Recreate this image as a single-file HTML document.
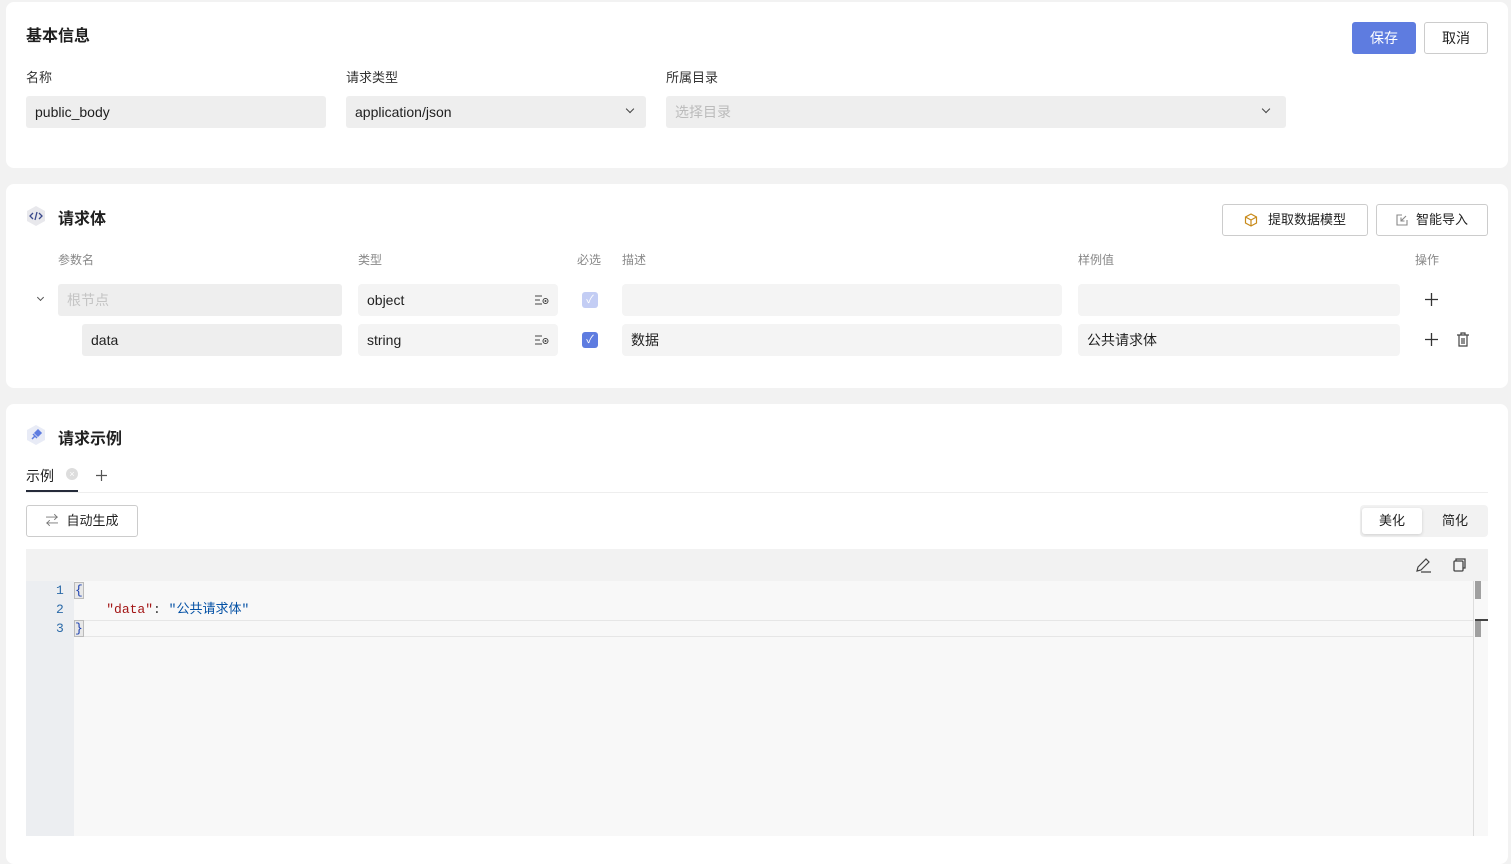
<!DOCTYPE html>
<html><head><meta charset="utf-8"><style>
*{box-sizing:border-box;margin:0;padding:0}
body{width:1511px;height:856px;background:#f2f2f2;font-family:"Liberation Sans","Noto Sans CJK SC",sans-serif;color:#1f1f1f;position:relative;overflow:hidden;font-size:14px}
.card{position:absolute;left:6px;width:1502px;background:#fff;border-radius:8px}
.a{position:absolute}
.lbl{font-size:13px;color:#333}
.inp{position:absolute;background:#eeeeee;border-radius:3px;height:32px;line-height:32px;padding-left:9px;font-size:14px}
.inp2{position:absolute;background:#f4f4f4;border-radius:4px;height:32px;line-height:32px;padding-left:9px;font-size:14px}
.th{position:absolute;font-size:12px;color:#888;top:67px}
.btn{position:absolute;border:1px solid #ccc;border-radius:3px;background:#fff;font-size:13px;text-align:center}
.ti{font-size:16px;font-weight:bold;position:absolute}
.chev{position:absolute;width:7px;height:7px;border-right:1.3px solid #444;border-bottom:1.3px solid #444;transform:rotate(45deg)}
.mono{font-family:"Liberation Mono","Noto Sans CJK SC",monospace;font-size:13px}
.ticon{position:absolute;left:177px;top:11px}
</style></head><body>

<div class="card" style="top:2px;height:166px">
  <div class="ti" style="left:20px;top:20px">基本信息</div>
  <div class="btn" style="left:1346px;top:20px;width:64px;height:32px;line-height:30px;background:#5e7ce0;border-color:#5e7ce0;color:#fff;font-size:14px">保存</div>
  <div class="btn" style="left:1418px;top:20px;width:64px;height:32px;line-height:30px;font-size:14px">取消</div>
  <div class="a lbl" style="left:20px;top:65px">名称</div>
  <div class="a lbl" style="left:340px;top:65px">请求类型</div>
  <div class="a lbl" style="left:660px;top:65px">所属目录</div>
  <div class="inp" style="left:20px;top:94px;width:300px">public_body</div>
  <div class="inp" style="left:340px;top:94px;width:300px">application/json<div class="chev" style="left:281px;top:10px;width:6px;height:6px"></div></div>
  <div class="inp" style="left:660px;top:94px;width:620px;color:#bbb">选择目录<div class="chev" style="left:597px;top:10px;width:6px;height:6px"></div></div>
</div>

<div class="card" style="top:184px;height:204px">
  <svg class="a" style="left:19px;top:21px" width="22" height="22" viewBox="0 0 22 22"><polygon points="11,1 20,6 20,16 11,21 2,16 2,6" fill="#e8e8ec"/><path d="M8 8l-3 3 3 3M14 8l3 3-3 3M12 7l-2 8" stroke="#3b4a8c" stroke-width="1.3" fill="none"/></svg>
  <div class="ti" style="left:52px;top:21px">请求体</div>
  <div class="btn" style="left:1216px;top:20px;width:146px;height:32px;line-height:30px"><svg style="vertical-align:-3px;margin-right:10px" width="14" height="14" viewBox="0 0 14 14"><path d="M7 1l5.5 3v6L7 13 1.5 10V4z M1.5 4L7 7l5.5-3 M7 7v6" stroke="#c88a1a" fill="none" stroke-width="1.2"/></svg>提取数据模型</div>
  <div class="btn" style="left:1370px;top:20px;width:112px;height:32px;line-height:30px"><svg style="vertical-align:-2px;margin-right:8px" width="12" height="12" viewBox="0 0 12 12"><path d="M6 1H1v10h10V6 M10 2L5 7 M5 3.5V7h3.5" stroke="#888" fill="none" stroke-width="1.1"/></svg>智能导入</div>
  <div class="th" style="left:52px">参数名</div>
  <div class="th" style="left:352px">类型</div>
  <div class="th" style="left:571px">必选</div>
  <div class="th" style="left:616px">描述</div>
  <div class="th" style="left:1072px">样例值</div>
  <div class="th" style="left:1409px">操作</div>
  <div class="chev" style="left:32px;top:111px;width:5px;height:5px;border-color:#555"></div>
  <div class="inp" style="left:52px;top:100px;width:284px;color:#c4c4c4">根节点</div>
  <div class="inp2" style="left:352px;top:100px;width:200px">object<svg class="ticon" width="14" height="10" viewBox="0 0 14 10"><path d="M0 1h7M0 5h5M0 9h7" stroke="#444"/><circle cx="10.5" cy="6" r="2.5" stroke="#444" fill="none"/><circle cx="10.5" cy="6" r="1" fill="#444"/></svg></div>
  <div class="a" style="left:576px;top:108px;width:16px;height:16px;border-radius:3px;background:#c3cdf4;color:#fff;font-size:11px;line-height:16px;text-align:center">✓</div>
  <div class="inp2" style="left:616px;top:100px;width:440px"></div>
  <div class="inp2" style="left:1072px;top:100px;width:322px"></div>
  <svg class="a" style="left:1419px;top:109px" width="13" height="13" viewBox="0 0 13 13"><path d="M6.5 0v13M0 6.5h13" stroke="#333" stroke-width="1.3"/></svg>
  <div class="inp" style="left:76px;top:140px;width:260px">data</div>
  <div class="inp2" style="left:352px;top:140px;width:200px">string<svg class="ticon" width="14" height="10" viewBox="0 0 14 10"><path d="M0 1h7M0 5h5M0 9h7" stroke="#444"/><circle cx="10.5" cy="6" r="2.5" stroke="#444" fill="none"/><circle cx="10.5" cy="6" r="1" fill="#444"/></svg></div>
  <div class="a" style="left:576px;top:148px;width:16px;height:16px;border-radius:3px;background:#5e7ce0;color:#fff;font-size:11px;line-height:16px;text-align:center">✓</div>
  <div class="inp2" style="left:616px;top:140px;width:440px">数据</div>
  <div class="inp2" style="left:1072px;top:140px;width:322px">公共请求体</div>
  <svg class="a" style="left:1419px;top:149px" width="13" height="13" viewBox="0 0 13 13"><path d="M6.5 0v13M0 6.5h13" stroke="#333" stroke-width="1.3"/></svg>
  <svg class="a" style="left:1450px;top:148px" width="14" height="15" viewBox="0 0 14 15"><path d="M1 3h12M5 3V1h4v2M3 3v11h8V3M6 6v6M8 6v6" stroke="#444" fill="none" stroke-width="1.2"/></svg>
</div>

<div class="card" style="top:404px;height:460px">
  <svg class="a" style="left:19px;top:20px" width="22" height="22" viewBox="0 0 22 22"><polygon points="11,1 20,6 20,16 11,21 2,16 2,6" fill="#e8ebf6"/><path d="M7 15l3-3M8 10l4 4M10 9l3-3 3 3-3 3z" stroke="#5e7ce0" fill="#5e7ce0" stroke-width="1.5"/></svg>
  <div class="ti" style="left:52px;top:21px">请求示例</div>
  <div class="a" style="left:20px;top:62px;font-size:14px">示例</div>
  <div class="a" style="left:60px;top:64px;width:12px;height:12px;border-radius:50%;background:#ddd;color:#fff;font-size:9px;line-height:12px;text-align:center">×</div>
  <svg class="a" style="left:90px;top:66px" width="11" height="11" viewBox="0 0 11 11"><path d="M5.5 0v11M0 5.5h11" stroke="#555" stroke-width="1.2"/></svg>
  <div class="a" style="left:20px;top:86px;width:52px;height:2px;background:#252b3a"></div>
  <div class="a" style="left:20px;top:88px;width:1462px;height:1px;background:#eee"></div>
  <div class="btn" style="left:20px;top:101px;width:112px;height:32px;line-height:30px;font-size:13px"><span style="color:#777;margin-right:8px">⇄</span>自动生成</div>
  <div class="a" style="left:1354px;top:101px;width:128px;height:32px;background:#f2f2f2;border-radius:4px"></div>
  <div class="a" style="left:1356px;top:104px;width:60px;height:26px;background:#fff;border-radius:3px;box-shadow:0 1px 3px rgba(0,0,0,.15);text-align:center;line-height:26px;font-size:13px">美化</div>
  <div class="a" style="left:1419px;top:104px;width:60px;height:26px;text-align:center;line-height:26px;font-size:13px">简化</div>
  <div class="a" style="left:20px;top:145px;width:1462px;height:32px;background:#f2f2f2"></div>
  <svg class="a" style="left:1409px;top:153px" width="18" height="16" viewBox="0 0 18 16"><path d="M2 14l1-4 8-8 3 3-8 8z M6 15h10" stroke="#444" fill="none" stroke-width="1.2"/></svg>
  <svg class="a" style="left:1447px;top:154px" width="14" height="14" viewBox="0 0 14 14"><rect x="1" y="3" width="9" height="10" rx="1" stroke="#444" fill="none" stroke-width="1.3"/><path d="M3 3V1h9v9h-2" stroke="#444" fill="none" stroke-width="1.3"/></svg>
  <div class="a" style="left:20px;top:177px;width:1462px;height:255px;background:#f8f8f8"></div>
  <div class="a" style="left:20px;top:177px;width:48px;height:255px;background:#eceef1"></div>
  <div class="a" style="left:68px;top:216px;width:1400px;height:17px;border-top:1px solid #e6e6e6;border-bottom:1px solid #e6e6e6"></div>
  <div class="a" style="left:1467px;top:177px;width:1px;height:255px;background:#ddd"></div>
  <div class="a" style="left:1469px;top:177px;width:6px;height:18px;background:#a0a0a0"></div>
  <div class="a" style="left:1469px;top:215px;width:6px;height:18px;background:#a0a0a0"></div>
  <div class="a" style="left:1469px;top:215px;width:13px;height:1.5px;background:#444"></div>
  <div class="a mono" style="left:50px;top:177px;color:#2b6aa8;line-height:19px">1<br>2<br>3</div>
  <div class="a mono" style="left:69px;top:177px;line-height:19px;color:#333"><span style="color:#1a3fb0;background:#e8e8e8;outline:1px solid #bbb">{</span><br>&nbsp;&nbsp;&nbsp;&nbsp;<span style="color:#a31515">"data"</span>: <span style="color:#0451a5">"公共请求体"</span><br><span style="color:#1a3fb0;background:#e8e8e8;outline:1px solid #bbb">}</span></div>
</div>
</body></html>
